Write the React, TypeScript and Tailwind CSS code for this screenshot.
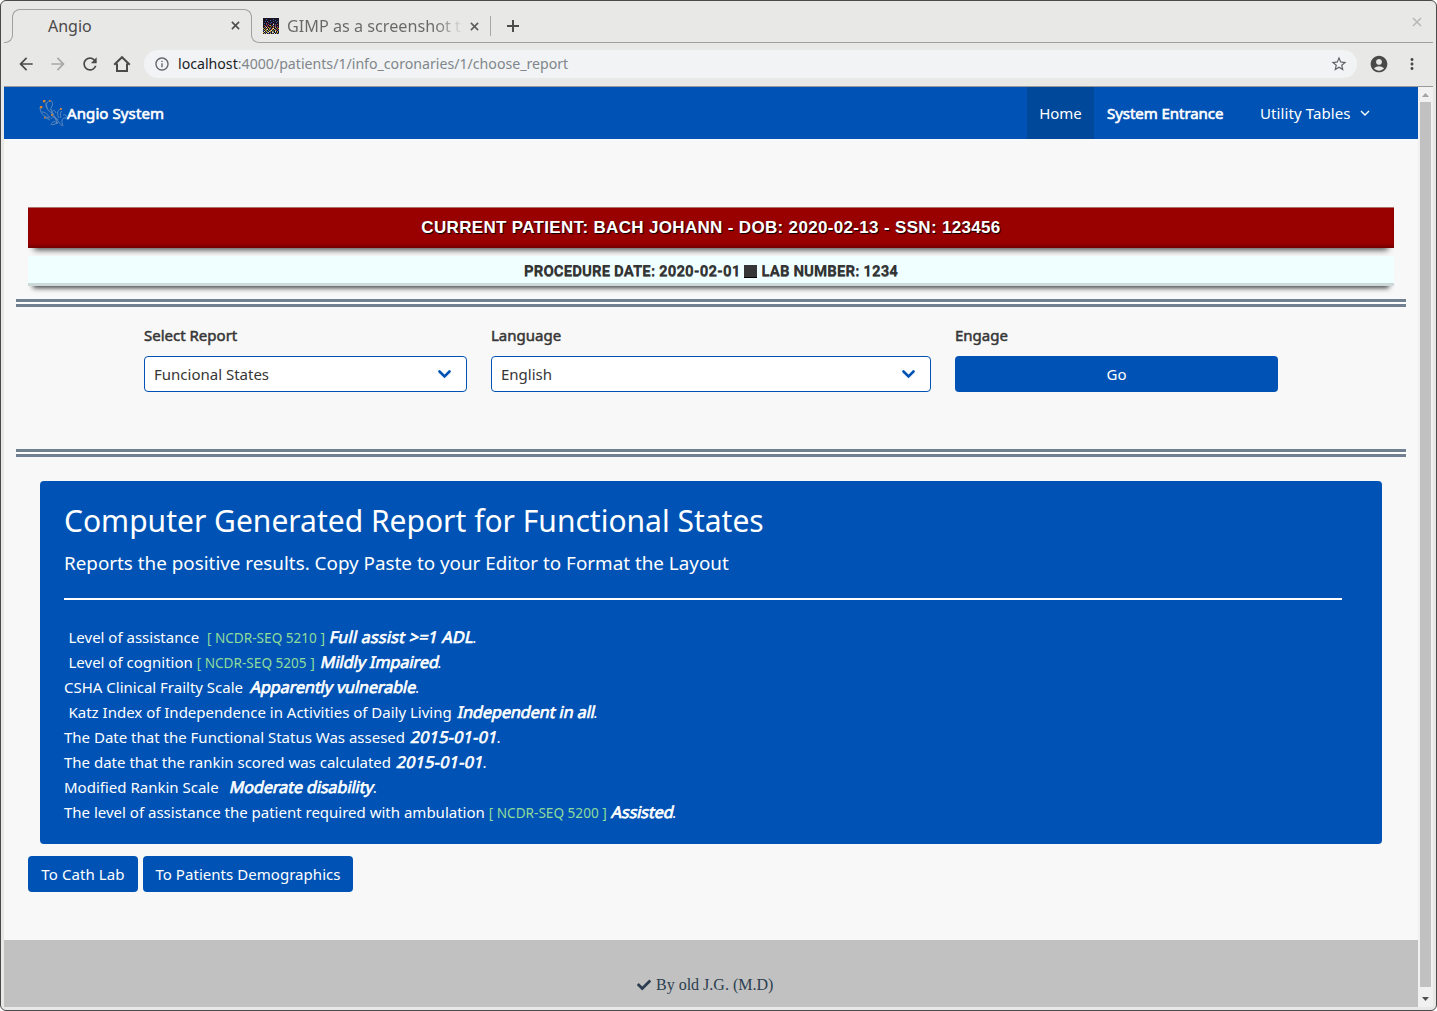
import type { ReactNode } from 'react';
import { MdArrowBack, MdArrowForward, MdRefresh, MdInfoOutline, MdStarBorder, MdAccountCircle, MdMoreVert } from 'react-icons/md';
import { FaCheck } from 'react-icons/fa';

function Cross({ size, className }: { size: number; className: string }) {
  return (
    <svg width={size} height={size} viewBox="0 0 10 10" className={className} fill="none" stroke="currentColor" strokeWidth="1.7">
      <path d="M1 1l8 8M9 1L1 9" />
    </svg>
  );
}

const pixelColors: Record<string, string> = {
  y: '#c8a83c',
  r: '#b03a3a',
  b: '#3a55a8',
  w: '#e0e0d0',
  g: '#5a7a3a',
  p: '#7d3a86',
};

const pixelRows = [
  '................',
  '...b......b.....',
  '.......b....b...',
  '..b.b.....b...b.',
  '.....p..b....b..',
  '.b.r...b..p.....',
  '...b.r....w.b.r.',
  '.r..p.ry.b..r...',
  '..y.r...r.y.b.p.',
  '.p.w.y.g..r.y.r.',
  'y.g.r.yb.yw..g.y',
  '.y.yw.g.ry.yb.r.',
  'b.yg.y.yw.g.yr.b',
  '.w.yb.wy.yb.w.y.',
  'y.b.yw.b.wy.b.y.',
  '.y.w.b.y.b.w.y.b',
];

function Favicon() {
  return (
    <svg width="16" height="16" viewBox="0 0 16 16" className="shrink-0" shapeRendering="crispEdges">
      <rect width="16" height="16" fill="#17141f" />
      {pixelRows.flatMap((row, y) =>
        row.split('').map((c, x) => (c === '.' ? null : <rect key={`${x}-${y}`} x={x} y={y} width="1" height="1" fill={pixelColors[c]} />)),
      )}
    </svg>
  );
}

function Logo() {
  return (
    <svg width="28" height="28" viewBox="0 0 28 28" className="shrink-0" fill="none" stroke="#7193bd" strokeWidth="0.8">
      <path d="M1 8c0 6 3 9 9 11M3 13c4 0 6 3 8 6M7 4c-1 5 3 9 8 11M12 2c-4-1-6 4-3 8M12 2c3 1 1 6-1 9M12 10c1 5 4 7 6 14M12 20c2-4 5-2 7 1M17 14c-1-4-5-3-4 1s4 4 6 7M23 10c-4 0-6 4-3 9M23 12c-2 1-2 4-1 7M24 16c4-1 5 3 2 3s-4 3-2 8M12 26c1-4 4-4 7-2M13 26l6-2M5 18l6 3M23 27l-4-5" />
      <g fill="#d9812e" stroke="none">
        <rect x="4" y="1" width="2.4" height="2.4" />
        <rect x="1" y="7" width="2.4" height="2.4" />
        <rect x="12" y="15" width="1.8" height="1.8" />
        <rect x="21" y="9" width="1.8" height="1.8" />
        <rect x="10" y="1" width="1.5" height="1.5" />
        <rect x="5" y="18" width="1.5" height="1.5" />
      </g>
    </svg>
  );
}

function BrowserChrome() {
  return (
    <header className="shrink-0 text-[#4a4a4a]">
      <div className="flex h-[42px] pt-2">
        <div className="h-[17px] w-[9px] self-end rounded-br-lg border-r border-b border-[#a0a0a0]" />
        <div className="relative -ml-px flex h-full w-[240px] items-center pr-[12px] pb-px pl-[36px] before:absolute before:inset-x-0 before:top-0 before:h-[17px] before:rounded-t-lg before:border-x before:border-t before:border-[#a0a0a0]">
          <span className="grow text-[16px]">Angio</span>
          <Cross size={9} className="text-[#4c4c4c]" />
        </div>
        <div className="relative -ml-px flex h-full grow items-center pl-[12px] before:absolute before:inset-x-0 before:bottom-0 before:h-[17px] before:rounded-bl-lg before:border-b before:border-l before:border-[#a0a0a0]">
          <Favicon />
          <span className="ml-2 w-[174px] bg-linear-to-r from-[#686868] from-85% to-[#dcdcda] bg-clip-text text-[16.2px] whitespace-nowrap text-transparent">
            GIMP as a screenshot t
          </span>
          <Cross size={9} className="ml-[9px] text-[#5a5a5a]" />
          <span className="ml-[11px] h-5 w-px bg-[#a8a8a8]" />
          <svg width="12" height="12" viewBox="0 0 12 12" className="ml-4" fill="none" stroke="#4c4c4c" strokeWidth="2">
            <path d="M6 0v12M0 6h12" />
          </svg>
          <Cross size={10} className="mr-[11px] mb-2 ml-auto text-[#b9b9b9]" />
        </div>
      </div>
      <div className="flex h-[44px] items-center border-b border-[#9a9a9a] pb-px pl-[12px]">
        <MdArrowBack size={20} />
        <MdArrowForward size={20} className="ml-3 text-[#a8a8a8]" />
        <MdRefresh size={20} className="ml-3" />
        <svg width="18" height="18" viewBox="0 0 18 18" className="ml-[13px]" fill="none" stroke="currentColor" strokeWidth="2">
          <path d="M1.200 9.800L9 2.200l7.800 7.600M4 8.500V16h10V8.500" />
        </svg>
        <div className="ml-[13px] flex h-7 w-[1213px] items-center rounded-full bg-[#f1f3f4] pr-[9px] pl-[10px]">
          <MdInfoOutline size={16} className="text-[#5f6368]" />
          <span className="ml-2 grow text-[14.15px] text-[#80868b]">
            <span className="text-[#202124]">localhost</span>:4000/patients/1/info_coronaries/1/choose_report
          </span>
          <MdStarBorder size={18} className="text-[#5f6368]" />
        </div>
        <MdAccountCircle size={20} className="ml-3" />
        <MdMoreVert size={18} className="ml-[14px]" />
      </div>
    </header>
  );
}

function Navbar() {
  return (
    <nav className="flex h-[52px] items-center bg-[#0053b4] pr-12 pl-[35px] text-[15px] whitespace-nowrap text-white">
      <Logo />
      <span className="tracking-[0.1px] [-webkit-text-stroke:0.6px]">Angio System</span>
      <a className="ml-auto flex h-full w-[67px] items-center justify-center bg-[#00489a]">Home</a>
      <a className="ml-[13px] w-[117px] tracking-[-0.05px] [-webkit-text-stroke:0.6px]">System Entrance</a>
      <a className="ml-9 w-[100px] tracking-[0.1px]">Utility Tables</a>
      <svg width="10" height="7" viewBox="0 0 10 7" fill="none" stroke="currentColor" strokeWidth="1.4">
        <path d="M1 1l4 4 4-4" />
      </svg>
    </nav>
  );
}

function DoubleRule() {
  return <div className="h-2 border-y-[3px] border-[#708090] bg-white" />;
}

function Label({ children }: { children: ReactNode }) {
  return <div className="mb-[9px] h-6 leading-6 [-webkit-text-stroke:0.5px]">{children}</div>;
}

function Select({ label, value, width }: { label: string; value: string; width: string }) {
  return (
    <div className={width}>
      <Label>{label}</Label>
      <div className="flex h-9 items-center justify-between rounded border border-[#0053b4] bg-white pr-[15px] pl-[9px]">
        <span>{value}</span>
        <svg width="13" height="9" viewBox="0 0 13 9" fill="none" stroke="#0053b4" strokeWidth="2.6" strokeLinecap="round">
          <path d="M1.500 1.500l5 5 5-5" />
        </svg>
      </div>
    </div>
  );
}

type Row = { text: string; indent?: boolean; code?: string; wide?: boolean; result: string; fit: string };

const rows: Row[] = [
  { text: 'Level of assistance', indent: true, wide: true, code: '5210', result: 'Full assist >=1 ADL', fit: 'ml-px tracking-[0.2px]' },
  { text: 'Level of cognition', indent: true, code: '5205', result: 'Mildly Impaired', fit: 'ml-[2px] tracking-[-0.05px]' },
  { text: 'CSHA Clinical Frailty Scale', result: 'Apparently vulnerable', fit: 'ml-[4px] tracking-[-0.1px]' },
  { text: 'Katz Index of Independence in Activities of Daily Living', indent: true, result: 'Independent in all', fit: 'ml-[2px] tracking-[-0.08px]' },
  { text: 'The Date that the Functional Status Was assesed', result: '2015-01-01', fit: 'ml-[2px] tracking-[0.25px]' },
  { text: 'The date that the rankin scored was calculated', result: '2015-01-01', fit: 'ml-[2px] tracking-[0.25px]' },
  { text: 'Modified Rankin Scale', wide: true, result: 'Moderate disability', fit: 'ml-[4px] tracking-[-0.1px]' },
  { text: 'The level of assistance the patient required with ambulation', code: '5200', result: 'Assisted', fit: 'ml-px tracking-[-0.1px]' },
];

function Report() {
  return (
    <section className="mx-6 mt-6 h-[363px] rounded bg-[#0053b4] pr-10 pl-6 text-white">
      <h1 className="pt-[18px] text-[30px] leading-[44px]">Computer Generated Report for Functional States</h1>
      <p className="mt-[6px] text-[18.83px] leading-7">Reports the positive results. Copy Paste to your Editor to Format the Layout</p>
      <div className="mt-[21px] h-0.5 bg-white" />
      <div className="mt-[25px]">
        {rows.map((r) => (
          <div key={r.text} className="h-[25px] leading-[25px] whitespace-pre">
            {r.indent && <span className="inline-block w-[4.5px]" />}
            {r.text}
            {r.wide ? '  ' : ' '}
            {r.code && <span className="text-[13.6px] text-[#8fdc9c]">[ NCDR-SEQ {r.code} ]</span>}
            {r.code && ' '}
            <em className={`inline-block -skew-x-12 text-[16.2px] leading-none not-italic [-webkit-text-stroke:0.7px] ${r.fit}`}>{r.result}</em>
            <span className="-ml-[1.5px]">.</span>
          </div>
        ))}
      </div>
    </section>
  );
}

function Scrollbar() {
  return (
    <div className="flex w-[15px] shrink-0 flex-col items-center bg-[#f1f1f1]">
      <svg width="15" height="15" viewBox="0 0 15 15">
        <path d="M4 10l3.500-4 3.500 4z" fill="#a3a3a3" />
      </svg>
      <div className="w-[11px] grow bg-[#c1c1c1]" />
      <svg width="15" height="20" viewBox="0 0 15 20">
        <path d="M4 10l3.500 4 3.500-4z" fill="#505050" />
      </svg>
    </div>
  );
}

export default function App() {
  return (
    <div className="h-[1011px] w-[1437px] overflow-hidden bg-white font-['Noto_Sans',sans-serif]">
      <div className="flex h-full flex-col rounded-md border border-[#4a4a4a] bg-[#e8e8e6] px-[3px] pb-[3px]">
        <BrowserChrome />
        <div className="flex min-h-0 grow">
          <main className="flex grow flex-col bg-[#f8f8f8] text-[15px] text-[#363636]">
            <Navbar />
            <div className="px-3">
              <div className="mx-3 mt-[68px] flex h-[41px] items-center justify-center border-t border-[#b07070] bg-[#990000] pb-px font-['Liberation_Sans',sans-serif] text-[17px] font-bold tracking-[0.33px] text-white shadow-[inset_0_-3px_2px_rgba(0,0,0,0.2),0_8px_6px_-6px_rgba(0,0,0,0.7)] [text-shadow:1px_1px_1px_#000]">
                CURRENT PATIENT: BACH JOHANN - DOB: 2020-02-13 - SSN: 123456
              </div>
              <div className="mx-3 mt-2 mb-[13px] flex h-[30px] items-center justify-center bg-[#f0ffff] font-[Roboto,sans-serif] text-[15px] font-bold tracking-[0.08px] text-[#333] shadow-[inset_0_-3px_0_rgba(0,0,0,0.15),0_7px_5px_-5px_rgba(0,0,0,0.75)] [text-shadow:0_1px_0_#0008]">
                <span>PROCEDURE DATE: 2020-02-01</span>
                <span className="mx-1 size-[13px] border-b border-black bg-[#363636]" />
                <span>LAB NUMBER: 1234</span>
              </div>
              <DoubleRule />
              <div className="mt-[16px] mb-[57px] flex gap-6 pl-32">
                <Select label="Select Report" value="Funcional States" width="w-[323px]" />
                <Select label="Language" value="English" width="w-[440px]" />
                <div className="w-[323px]">
                  <Label>Engage</Label>
                  <button className="block h-9 w-full rounded bg-[#0053b4] text-white">Go</button>
                </div>
              </div>
              <DoubleRule />
              <Report />
              <div className="mx-3 mt-3 flex gap-[5px] text-white">
                <button className="h-9 w-[110px] rounded bg-[#0053b4] tracking-[0.1px]">To Cath Lab</button>
                <button className="h-9 w-[210px] rounded bg-[#0053b4] tracking-[0.04px]">To Patients Demographics</button>
              </div>
            </div>
            <footer className="mt-12 flex grow items-start bg-[#c1c1c1] pt-[33px] pl-[633px] font-['Liberation_Serif',serif] text-[16px] text-[#2c3e50]">
              <FaCheck size={14} className="mt-[5px] mr-[5px]" />
              By old J.G. (M.D)
            </footer>
          </main>
          <Scrollbar />
        </div>
      </div>
    </div>
  );
}
